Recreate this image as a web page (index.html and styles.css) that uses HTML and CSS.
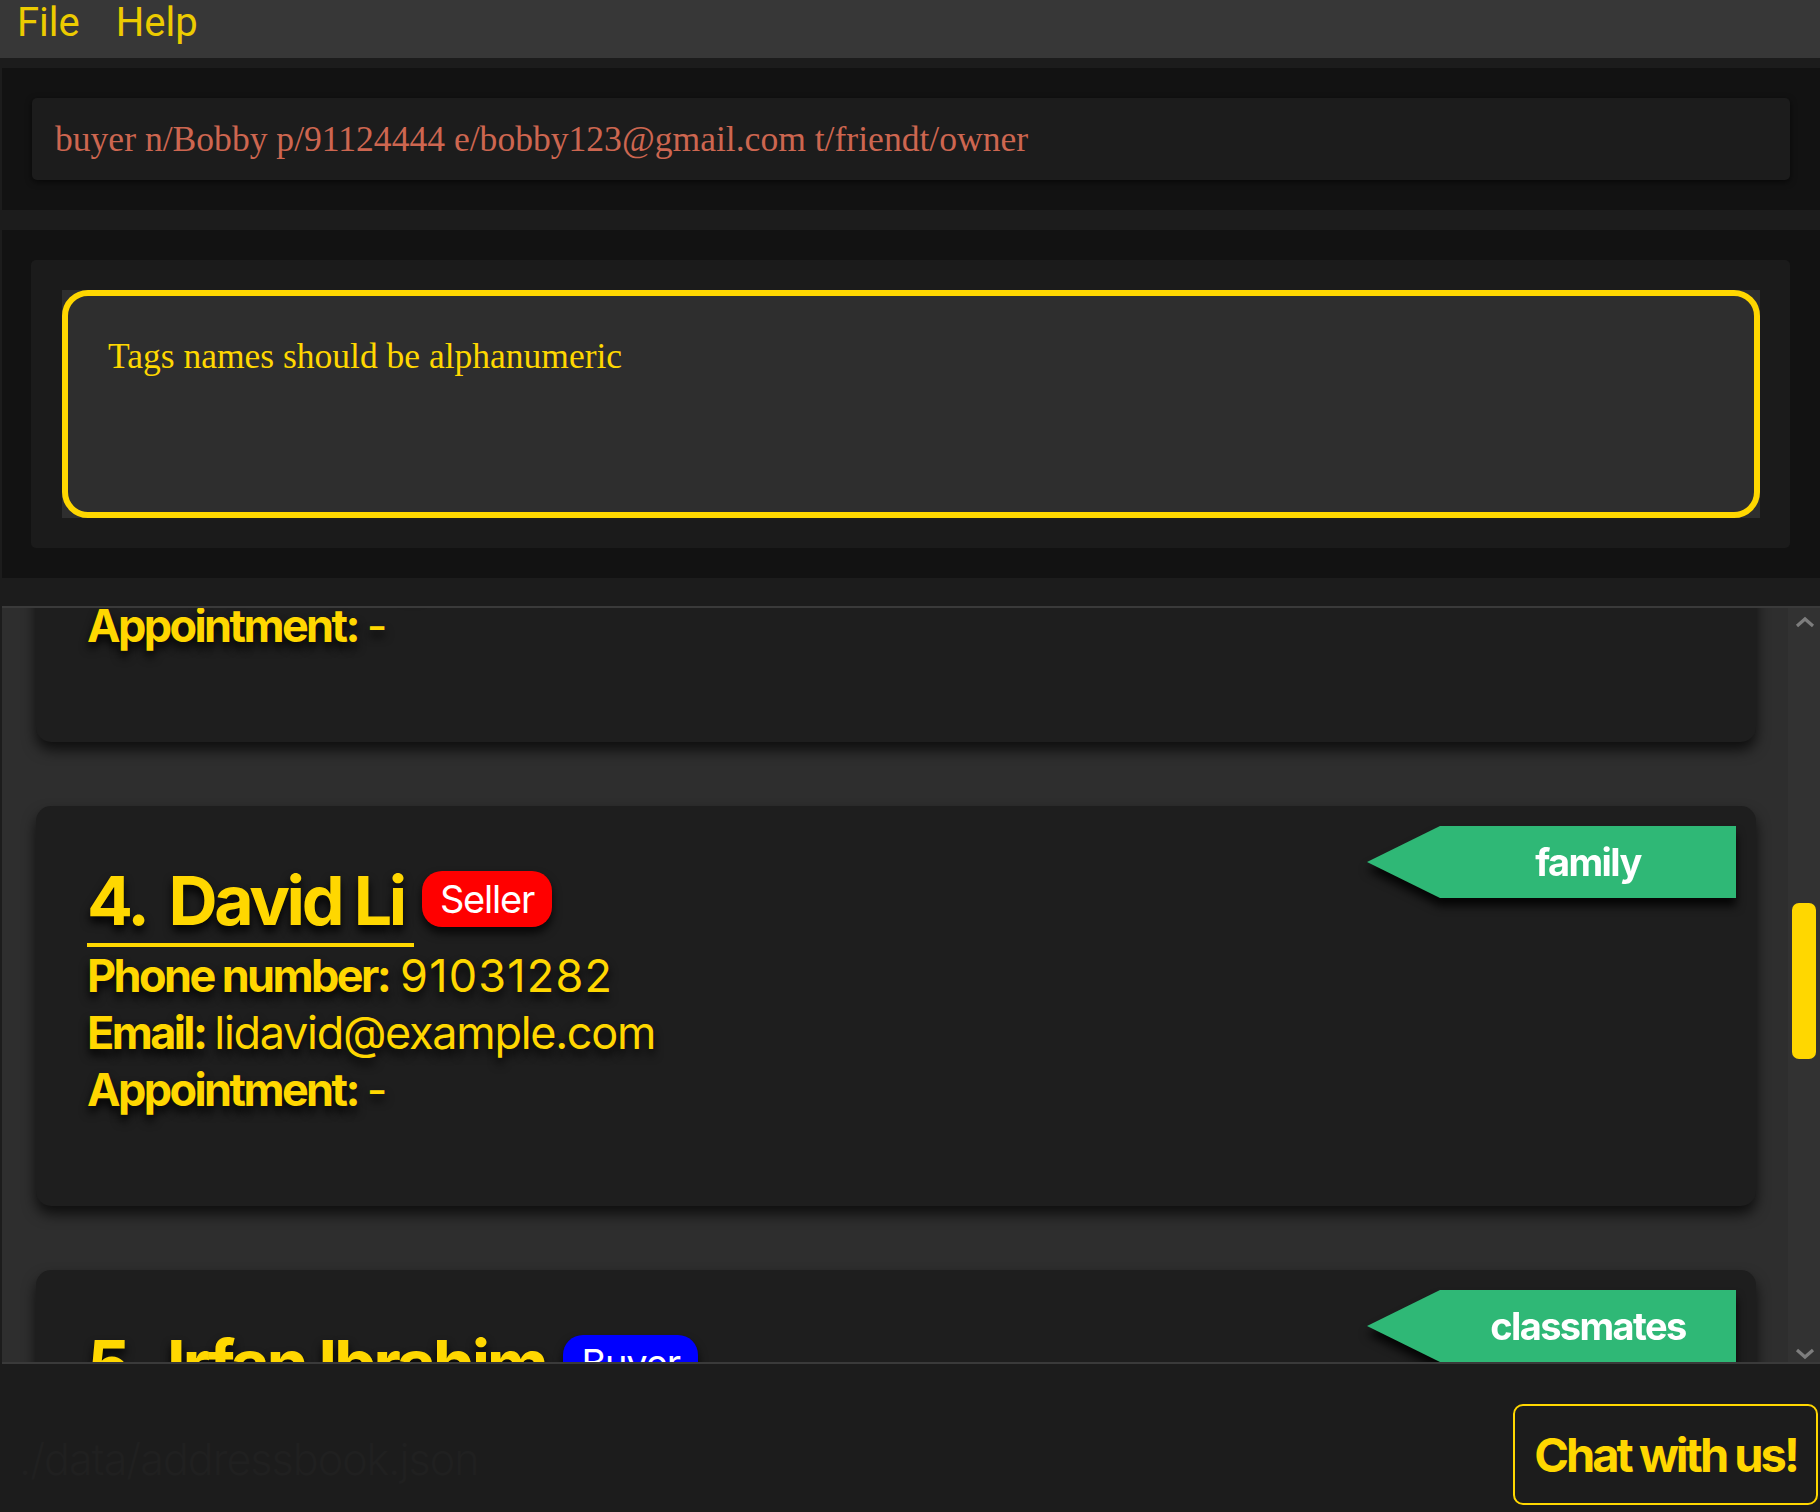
FILE: index.html
```html
<!DOCTYPE html>
<html lang="en">
<head>
<meta charset="utf-8">
<title>Address Book</title>
<link rel="stylesheet" href="styles.css">
</head>
<body>
<div class="app">
  <div class="menubar">
    <span class="menu-item">File</span>
    <span class="menu-item">Help</span>
  </div>

  <div class="command-panel">
    <div class="command-box">buyer n/Bobby p/91124444 e/bobby123@gmail.com t/friendt/owner</div>
  </div>

  <div class="result-panel">
    <div class="result-box">
      <div class="result-area">
        <div class="result-frame">Tags names should be alphanumeric</div>
      </div>
    </div>
  </div>

  <div class="list-panel">
    <div class="list-viewport">
      <div class="list-content">
        <div class="card">
          <div class="card-info">
            <div class="name-row">
              <div class="name"><span class="idx">3.</span>Charlotte Oliveiro</div>
              <div class="badge buyer">Buyer</div>
            </div>
            <div class="line"><b>Phone number:</b><span class="num">93210283</span></div>
            <div class="line"><b>Email:</b><span>charlotte@example.com</span></div>
            <div class="line"><b>Appointment:</b><span>-</span></div>
          </div>
          <div class="tag-wrap"><div class="tag">neighbours</div></div>
        </div>

        <div class="card">
          <div class="card-info">
            <div class="name-row">
              <div class="name"><span class="idx">4.</span>David Li</div>
              <div class="badge seller">Seller</div>
            </div>
            <div class="line"><b>Phone number:</b><span class="num">91031282</span></div>
            <div class="line"><b>Email:</b><span>lidavid@example.com</span></div>
            <div class="line"><b>Appointment:</b><span>-</span></div>
          </div>
          <div class="tag-wrap"><div class="tag">family</div></div>
        </div>

        <div class="card">
          <div class="card-info">
            <div class="name-row">
              <div class="name"><span class="idx">5.</span>Irfan Ibrahim</div>
              <div class="badge buyer">Buyer</div>
            </div>
            <div class="line"><b>Phone number:</b><span class="num">92492021</span></div>
            <div class="line"><b>Email:</b><span>irfan@example.com</span></div>
            <div class="line"><b>Appointment:</b><span>-</span></div>
          </div>
          <div class="tag-wrap"><div class="tag">classmates</div></div>
        </div>
      </div>
    </div>
    <div class="scrollbar">
      <div class="arrow">
        <svg width="20" height="12" viewBox="0 0 20 12"><path d="M2 10 L10 3 L18 10" fill="none" stroke="#7d7d7d" stroke-width="3.2" stroke-linejoin="miter"/></svg>
      </div>
      <div class="track"><div class="thumb"></div></div>
      <div class="arrow down">
        <svg width="20" height="12" viewBox="0 0 20 12"><path d="M2 2 L10 9 L18 2" fill="none" stroke="#7d7d7d" stroke-width="3.2" stroke-linejoin="miter"/></svg>
      </div>
    </div>
  </div>

  <div class="footer">
    <div class="status">./data/addressbook.json</div>
    <div class="chat">Chat with us!</div>
  </div>
</div>
</body>
</html>
```

FILE: styles.css
```css
* { box-sizing: border-box; margin: 0; padding: 0; }

html, body {
  width: 1820px;
  height: 1512px;
  overflow: hidden;
  background: #1c1c1c;
}

body {
  font-family: Inter, "Noto Sans", sans-serif;
}

.app {
  display: flex;
  flex-direction: column;
  height: 1512px;
}

/* Menu bar */
.menubar {
  height: 58px;
  flex-shrink: 0;
  background: #373737;
  display: flex;
  gap: 36px;
  padding: 2px 0 0 17px;
}

.menu-item {
  font-family: Roboto, "Liberation Sans", sans-serif;
  font-size: 40px;
  line-height: 42px;
  color: #eccb00;
}

/* Command */
.command-panel {
  flex-shrink: 0;
  height: 142px;
  margin: 10px 0 0 2px;
  background: #121212;
  padding: 30px;
}

.command-box {
  height: 82px;
  background: #1c1c1c;
  border-radius: 5px;
  box-shadow: 0 2px 6px rgba(0, 0, 0, 0.6);
  padding-left: 23px;
  font-family: "Liberation Serif", serif;
  font-size: 35.6px;
  line-height: 82px;
  color: #cd6650;
  white-space: nowrap;
  overflow: hidden;
}

/* Result */
.result-panel {
  flex-shrink: 0;
  height: 348px;
  margin: 20px 0 0 2px;
  background: #121212;
  padding: 30px 30px 30px 29px;
}

.result-box {
  height: 288px;
  background: #1b1b1b;
  border-radius: 5px;
  padding: 30px 30px 30px 31px;
}

.result-area {
  height: 228px;
  background: #2e2e2e;
}

.result-frame {
  height: 100%;
  border: 6px solid #ffd700;
  border-radius: 26px;
  padding: 39px 40px;
  font-family: "Liberation Serif", serif;
  font-size: 35.5px;
  line-height: normal;
  color: #ffd700;
}

/* List */
.list-panel {
  flex-shrink: 0;
  height: 758px;
  margin: 28px 0 0 2px;
  border-top: 2px solid #3a3a3a;
  border-bottom: 2px solid #3a3a3a;
  background: #2e2e2e;
  display: flex;
}

.list-viewport {
  flex: 1;
  overflow: hidden;
  padding: 0 32px 0 34px;
}

.list-content {
  margin-top: -266px;
  display: flex;
  flex-direction: column;
  gap: 64px;
}

.card {
  flex-shrink: 0;
  height: 400px;
  background: #1e1e1e;
  border-radius: 15px;
  box-shadow: 0 8px 14px rgba(0, 0, 0, 0.7);
  display: flex;
  justify-content: space-between;
  align-items: flex-start;
  padding: 20px 20px 0 51px;
}

.card-info {
  padding-top: 40px;
  color: #ffd700;
}

.name-row {
  display: flex;
  align-items: flex-start;
}

.name {
  font-size: 68px;
  line-height: 69px;
  font-weight: 700;
  letter-spacing: -3.4px;
  border-bottom: 4px solid #ffd700;
  padding: 0 10px 8px 0;
  white-space: nowrap;
  text-shadow: 0 6px 10px rgba(0, 0, 0, 0.95);
}

.idx {
  margin-right: 22px;
}

.badge {
  margin: 5px 0 0 8px;
  height: 56px;
  border-radius: 20px;
  padding: 0 18px;
  font-size: 38px;
  line-height: 56px;
  letter-spacing: -1.2px;
  color: #ffffff;
  box-shadow: 0 6px 10px rgba(0, 0, 0, 0.8);
}

.seller { background: #ff0000; }
.buyer { background: #0000ff; }

.line {
  font-size: 45px;
  line-height: 57px;
  white-space: nowrap;
  text-shadow: 0 6px 10px rgba(0, 0, 0, 0.95);
}

.line b {
  font-weight: 700;
  letter-spacing: -2.6px;
}

.line span {
  font-weight: 400;
  letter-spacing: -1.3px;
  margin-left: 9px;
}

.line span.num {
  letter-spacing: 1.2px;
  margin-left: 11px;
}

.tag-wrap {
  filter: drop-shadow(0 8px 5px rgba(0, 0, 0, 0.85));
}

.tag {
  width: 369px;
  height: 72px;
  background: #2fb876;
  clip-path: polygon(0 50%, 73px 0, 100% 0, 100% 100%, 73px 100%);
  padding-left: 73px;
  text-align: center;
  font-size: 38px;
  font-weight: 700;
  letter-spacing: -1.6px;
  line-height: 72px;
  color: #ffffff;
}

/* Scrollbar */
.scrollbar {
  width: 32px;
  flex-shrink: 0;
  background: #323232;
  display: flex;
  flex-direction: column;
}

.arrow {
  height: 28px;
  display: flex;
  justify-content: center;
  align-items: center;
  padding-left: 1px;
}

.arrow.down {
  align-items: flex-end;
  padding-bottom: 2px;
}

.track {
  flex: 1;
  padding: 267px 4px 0 4px;
}

.thumb {
  height: 156px;
  background: #ffd700;
  border-radius: 7px;
}

/* Footer */
.footer {
  flex: 1;
  display: flex;
  justify-content: space-between;
  align-items: flex-end;
  padding: 0 2px 7px 19px;
}

.status {
  font-size: 43px;
  font-weight: 300;
  letter-spacing: -1px;
  color: #202020;
  margin-bottom: 20px;
}

.chat {
  width: 305px;
  height: 101px;
  border: 2px solid #ffd700;
  border-radius: 10px;
  display: flex;
  align-items: center;
  justify-content: center;
  font-size: 47px;
  font-weight: 700;
  letter-spacing: -3px;
  color: #ffd700;
}
```
